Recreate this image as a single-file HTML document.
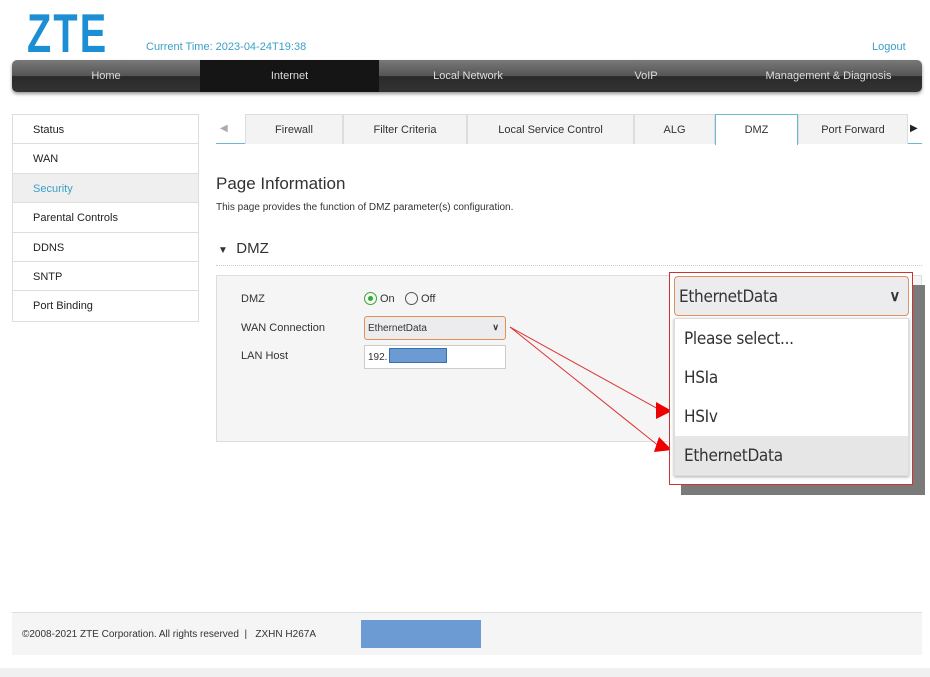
<!DOCTYPE html>
<html><head><meta charset="utf-8"><style>
*{margin:0;padding:0;box-sizing:border-box}
body{width:930px;height:677px;background:#fff;font-family:"Liberation Sans",sans-serif;position:relative;overflow:hidden;font-size:11px;color:#333}
.a{position:absolute}
.nav{left:12px;top:60px;width:910px;height:32px;border-radius:5px;background:linear-gradient(#787878,#555 50%,#2a2a2a 51%,#333);box-shadow:0 2px 3px #999;overflow:hidden;display:flex}
.nav div{color:#ddd;font-size:11px;text-align:center;line-height:33px}
.side{left:12px;top:114px;width:187px;border:1px solid #ddd}
.side div{height:29.4px;line-height:30px;padding-left:20px;border-bottom:1px solid #ddd;color:#222;font-size:11px}
.tabs{left:216px;top:114px;width:706px;height:30px;border-bottom:1px solid #6bb8d4}
.tab{position:absolute;top:0;height:30px;border:1px solid #ddd;border-bottom:none;background:#f3f3f3;text-align:center;line-height:30px;font-size:11px;color:#333}
.dd div{height:39px;line-height:40px;padding-left:9px;font-family:"DejaVu Sans Condensed","DejaVu Sans",sans-serif;font-size:17px;color:#333;letter-spacing:-0.3px}
</style></head><body>
<div class="a" style="left:27px;top:1px;font-size:55px;line-height:64px;font-weight:bold;color:#1b8ed4;letter-spacing:3px;transform:scaleX(0.72);transform-origin:left">ZTE</div>
<div class="a" style="left:146px;top:41px;color:#3aa0c8;font-size:11px">Current Time: 2023-04-24T19:38</div>
<div class="a" style="left:872px;top:41px;color:#3aa0c8;font-size:11px">Logout</div>
<div class="a nav">
<div style="width:188px">Home</div>
<div style="width:179px;background:#151515">Internet</div>
<div style="width:178px">Local Network</div>
<div style="width:178px">VoIP</div>
<div style="width:187px">Management &amp; Diagnosis</div>
</div>
<div class="a side">
<div>Status</div><div>WAN</div><div style="background:#efefef;color:#3aa0c8">Security</div><div>Parental Controls</div><div>DDNS</div><div>SNTP</div><div style="border-bottom:none">Port Binding</div>
</div>
<div class="a tabs">
<div class="a" style="left:4px;top:9px;color:#aaa;font-size:10px">◀</div>
<div class="tab" style="left:29px;width:98px">Firewall</div>
<div class="tab" style="left:127px;width:124px">Filter Criteria</div>
<div class="tab" style="left:251px;width:167px">Local Service Control</div>
<div class="tab" style="left:418px;width:81px">ALG</div>
<div class="tab" style="left:499px;width:83px;background:#fff;border-color:#6bb8d4;height:31px">DMZ</div>
<div class="tab" style="left:582px;width:110px">Port Forward</div>
<div class="a" style="left:694px;top:9px;color:#222;font-size:10px">▶</div>
</div>
<div class="a" style="left:216px;top:174px;font-size:17px;color:#333">Page Information</div>
<div class="a" style="left:216px;top:202px;font-size:10px;color:#333">This page provides the function of DMZ parameter(s) configuration.</div>
<div class="a" style="left:218px;top:240px;font-size:15px;color:#333"><span style="font-size:10px">▼</span>&nbsp; DMZ</div>
<div class="a" style="left:216px;top:265px;width:706px;border-top:1px dotted #ccc"></div>
<div class="a" style="left:216px;top:275px;width:706px;height:167px;background:#f5f5f5;border:1px solid #ddd"></div>
<div class="a" style="left:241px;top:293px">DMZ</div>
<div class="a" style="left:241px;top:322px">WAN Connection</div>
<div class="a" style="left:241px;top:350px">LAN Host</div>
<div class="a" style="left:364px;top:292px;width:13px;height:13px;border:1px solid #3a3;border-radius:50%"><div class="a" style="left:3px;top:3px;width:5px;height:5px;border-radius:50%;background:#3a3"></div></div>
<div class="a" style="left:380px;top:293px">On</div>
<div class="a" style="left:405px;top:292px;width:13px;height:13px;border:1px solid #555;border-radius:50%"></div>
<div class="a" style="left:421px;top:293px">Off</div>
<div class="a" style="left:364px;top:316px;width:142px;height:24px;border:1px solid #e0905a;border-radius:3px;background:#ececef;padding:6px 3px;font-size:10px">EthernetData<span style="position:absolute;right:6px;top:5px;font-size:9px;font-weight:bold">∨</span></div>
<div class="a" style="left:364px;top:345px;width:142px;height:24px;border:1px solid #ccc;background:#fff;padding:6px 3px;font-size:10px">192.</div>
<div class="a" style="left:389px;top:348px;width:58px;height:15px;background:#6b9bd2;border:1px solid #3a6fae"></div>
<svg class="a" style="left:0;top:0" width="930" height="677">
<line x1="510" y1="327" x2="660" y2="410" stroke="#d33" stroke-width="1"/>
<line x1="510" y1="327" x2="660" y2="447" stroke="#d33" stroke-width="1"/>
<polygon points="672,411 656,402 656,419" fill="#e00"/>
<polygon points="672,450 659,437 654,452" fill="#e00"/>
</svg>
<div class="a" style="left:681px;top:285px;width:244px;height:210px;background:#7a7a7a"></div>
<div class="a" style="left:669px;top:272px;width:244px;height:213px;border:1px solid #c33;background:#fff"></div>
<div class="a" style="left:674px;top:276px;width:235px;height:40px;border:1px solid #e0905a;border-radius:4px;background:#ececef;padding:10px 4px;font-family:'DejaVu Sans Condensed','DejaVu Sans',sans-serif;font-size:17px;color:#333;letter-spacing:-0.3px">EthernetData<span style="position:absolute;right:8px;top:10px;font-size:15px;font-weight:bold;font-family:'Liberation Sans',sans-serif">∨</span></div>
<div class="a dd" style="left:674px;top:318px;width:235px;border:1px solid #ddd;box-shadow:0 1px 3px #aaa">
<div>Please select...</div><div>HSIa</div><div>HSIv</div><div style="background:#e6e6e6">EthernetData</div>
</div>
<div class="a" style="left:12px;top:612px;width:910px;height:43px;background:#f5f5f5;border-top:1px solid #ddd"></div>
<div class="a" style="left:22px;top:629px;font-size:10px;color:#333">©2008-2021 ZTE Corporation. All rights reserved &nbsp;| &nbsp; ZXHN H267A</div>
<div class="a" style="left:361px;top:620px;width:120px;height:28px;background:#6b9bd2"></div>
<div class="a" style="left:0;top:668px;width:930px;height:9px;background:#f0f0f0"></div>
</body></html>
